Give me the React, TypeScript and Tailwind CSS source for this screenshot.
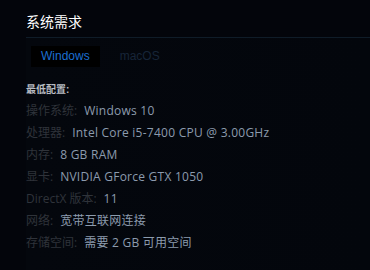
import React from 'react';

const specs = [
    { label: '操作系统:', value: 'Windows 10' },
    { label: '处理器:', value: 'Intel Core i5-7400 CPU @ 3.00GHz' },
    { label: '内存:', value: '8 GB RAM' },
    { label: '显卡:', value: 'NVIDIA GForce GTX 1050' },
    { label: 'DirectX 版本:', value: '11' },
    { label: '网络:', value: '宽带互联网连接' },
    { label: '存储空间:', value: '需要 2 GB 可用空间' },
];

const arial = { fontFamily: '"Liberation Sans", "Noto Sans CJK SC", sans-serif' };
const rowFont = { fontFamily: '"Open Sans", "Noto Sans CJK SC", sans-serif' };

export default function App() {
    return (
        <div className="w-[370px] h-[270px] bg-[#03050b] overflow-hidden pl-[26px]" style={arial}>
            {/* Title */}
            <h2 className="pt-[13px] h-[37px] text-[14px] leading-[19px] text-white">系统需求</h2>

            {/* Panel */}
            <div className="border-t border-[#0f1c28] bg-gradient-to-r from-[#04070d] to-[#03060c] h-full">
                <div className="flex items-center pl-[5px] pt-[8px]">
                    <div className="h-[21px] px-[10px] bg-black text-[#1b6fd2] text-[12px] leading-[21px]">Windows</div>
                    <div className="ml-[20px] text-[#172538] text-[12px] leading-[21px]">macOS</div>
                </div>

                <div className="mt-[16px] text-[10px] leading-[14px] text-[#b8bcc2] font-bold">最低配置:</div>

                <div className="mt-[3px] flex flex-col" style={rowFont}>
                    {specs.map(s => (
                        <div key={s.label} className="h-[22px] flex items-center text-[12px]">
                            <span className="text-[#2f333a]">{s.label}</span>
                            <span className="ml-[7px] tracking-[0.25px] text-[#8c9bad]">{s.value}</span>
                        </div>
                    ))}
                </div>
            </div>
        </div>
    );
}
